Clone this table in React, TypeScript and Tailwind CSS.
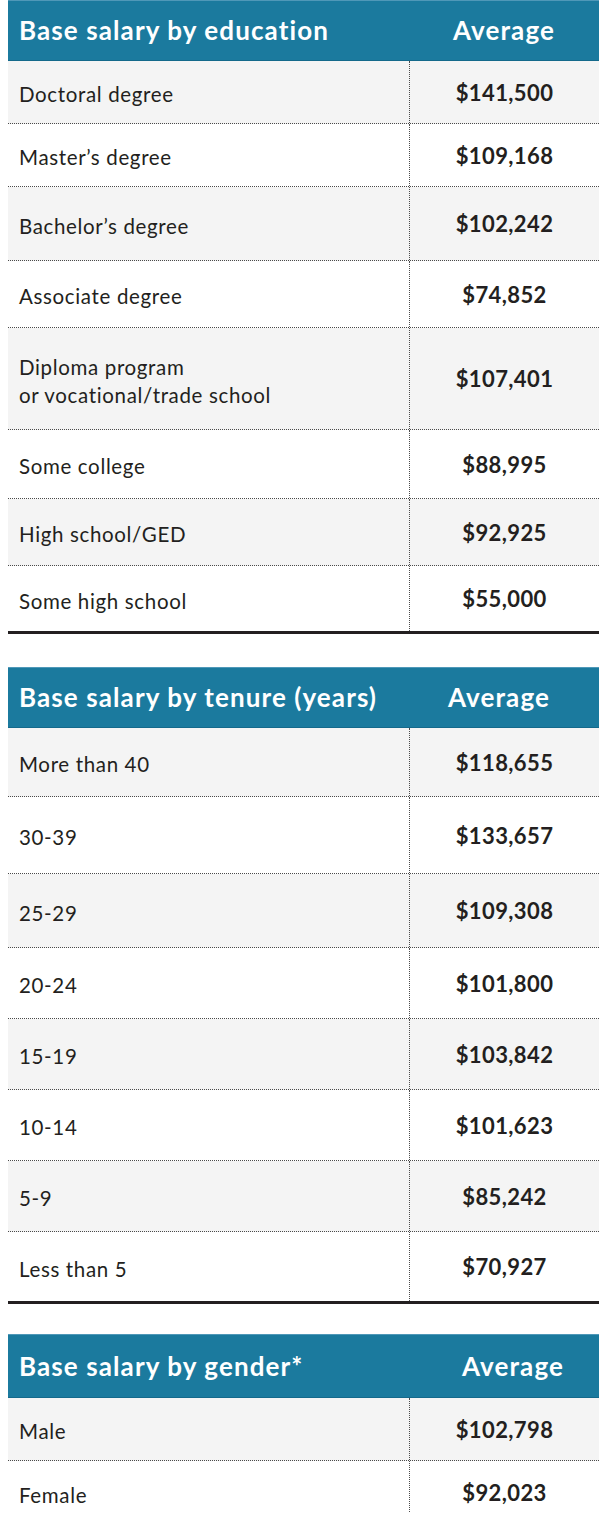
import React from "react";

type Row = { label: React.ReactNode; value: string; h: number };

const edu: Row[] = [
  { label: "Doctoral degree", value: "$141,500", h: 63 },
  { label: "Master\u2019s degree", value: "$109,168", h: 63 },
  { label: "Bachelor\u2019s degree", value: "$102,242", h: 74 },
  { label: "Associate degree", value: "$74,852", h: 67 },
  {
    label: (
      <>
        Diploma program
        <br />
        or vocational/trade school
      </>
    ),
    value: "$107,401",
    h: 102,
  },
  { label: "Some college", value: "$88,995", h: 69 },
  { label: "High school/GED", value: "$92,925", h: 67 },
  { label: "Some high school", value: "$55,000", h: 68 },
];

const tenure: Row[] = [
  { label: "More than 40", value: "$118,655", h: 69 },
  { label: "30-39", value: "$133,657", h: 77 },
  { label: "25-29", value: "$109,308", h: 74 },
  { label: "20-24", value: "$101,800", h: 71 },
  { label: "15-19", value: "$103,842", h: 71 },
  { label: "10-14", value: "$101,623", h: 71 },
  { label: "5-9", value: "$85,242", h: 71 },
  { label: "Less than 5", value: "$70,927", h: 72 },
];

const gender: Row[] = [
  { label: "Male", value: "$102,798", h: 63 },
  { label: "Female", value: "$92,023", h: 63 },
];

function Table({
  title,
  rows,
  headerH,
  last,
  avgClass,
}: {
  title: string;
  rows: Row[];
  headerH: number;
  last: "solid" | "none";
  avgClass: string;
}) {
  return (
    <div className="ml-[8px] w-[591px]">
      <div
        className="flex items-center bg-[#1b7a9e] border-t border-t-[#4f98b8] border-b border-b-[#14698b] text-white font-bold text-[26px] tracking-[1.1px]"
        style={{ height: headerH }}
      >
        <div className="w-[401px] pl-[11px] whitespace-nowrap">{title}</div>
        <div className={`flex-1 text-center ${avgClass}`}>Average</div>
      </div>
      {rows.map((r, i) => {
        const isLast = i === rows.length - 1;
        const bg = i % 2 === 0 ? "bg-[#f4f4f4]" : "bg-white";
        const border = isLast
          ? last === "solid"
            ? "border-b-[3px] border-solid border-b-[#231f20]"
            : ""
          : "border-b border-dotted border-b-[#4a4a4a]";
        return (
          <div
            key={i}
            className={`flex items-stretch ${bg} ${border}`}
            style={{ height: r.h }}
          >
            <div className="w-[401px] pl-[11px] flex items-center text-[20.5px] leading-[28px] tracking-[0.65px] text-[#231f20] pt-[4px]">
              <div>{r.label}</div>
            </div>
            <div className="flex-1 border-l border-dotted border-l-[#4a4a4a] flex items-center justify-center font-bold text-[22px] tracking-[0.4px] text-[#231f20]">
              {r.value}
            </div>
          </div>
        );
      })}
    </div>
  );
}

export default function App() {
  return (
    <div
      className="w-[600px] h-[1513px] overflow-hidden bg-white"
      style={{ fontFamily: "Lato, 'Noto Sans', sans-serif" }}
    >
      <Table title="Base salary by education" rows={edu} headerH={61} last="solid" avgClass="" />
      <div className="h-[33px]" />
      <Table title="Base salary by tenure (years)" rows={tenure} headerH={61} last="solid" avgClass="pr-[10px]" />
      <div className="h-[30px]" />
      <Table title="Base salary by gender*" rows={gender} headerH={64} last="none" avgClass="pl-[18px]" />
    </div>
  );
}
